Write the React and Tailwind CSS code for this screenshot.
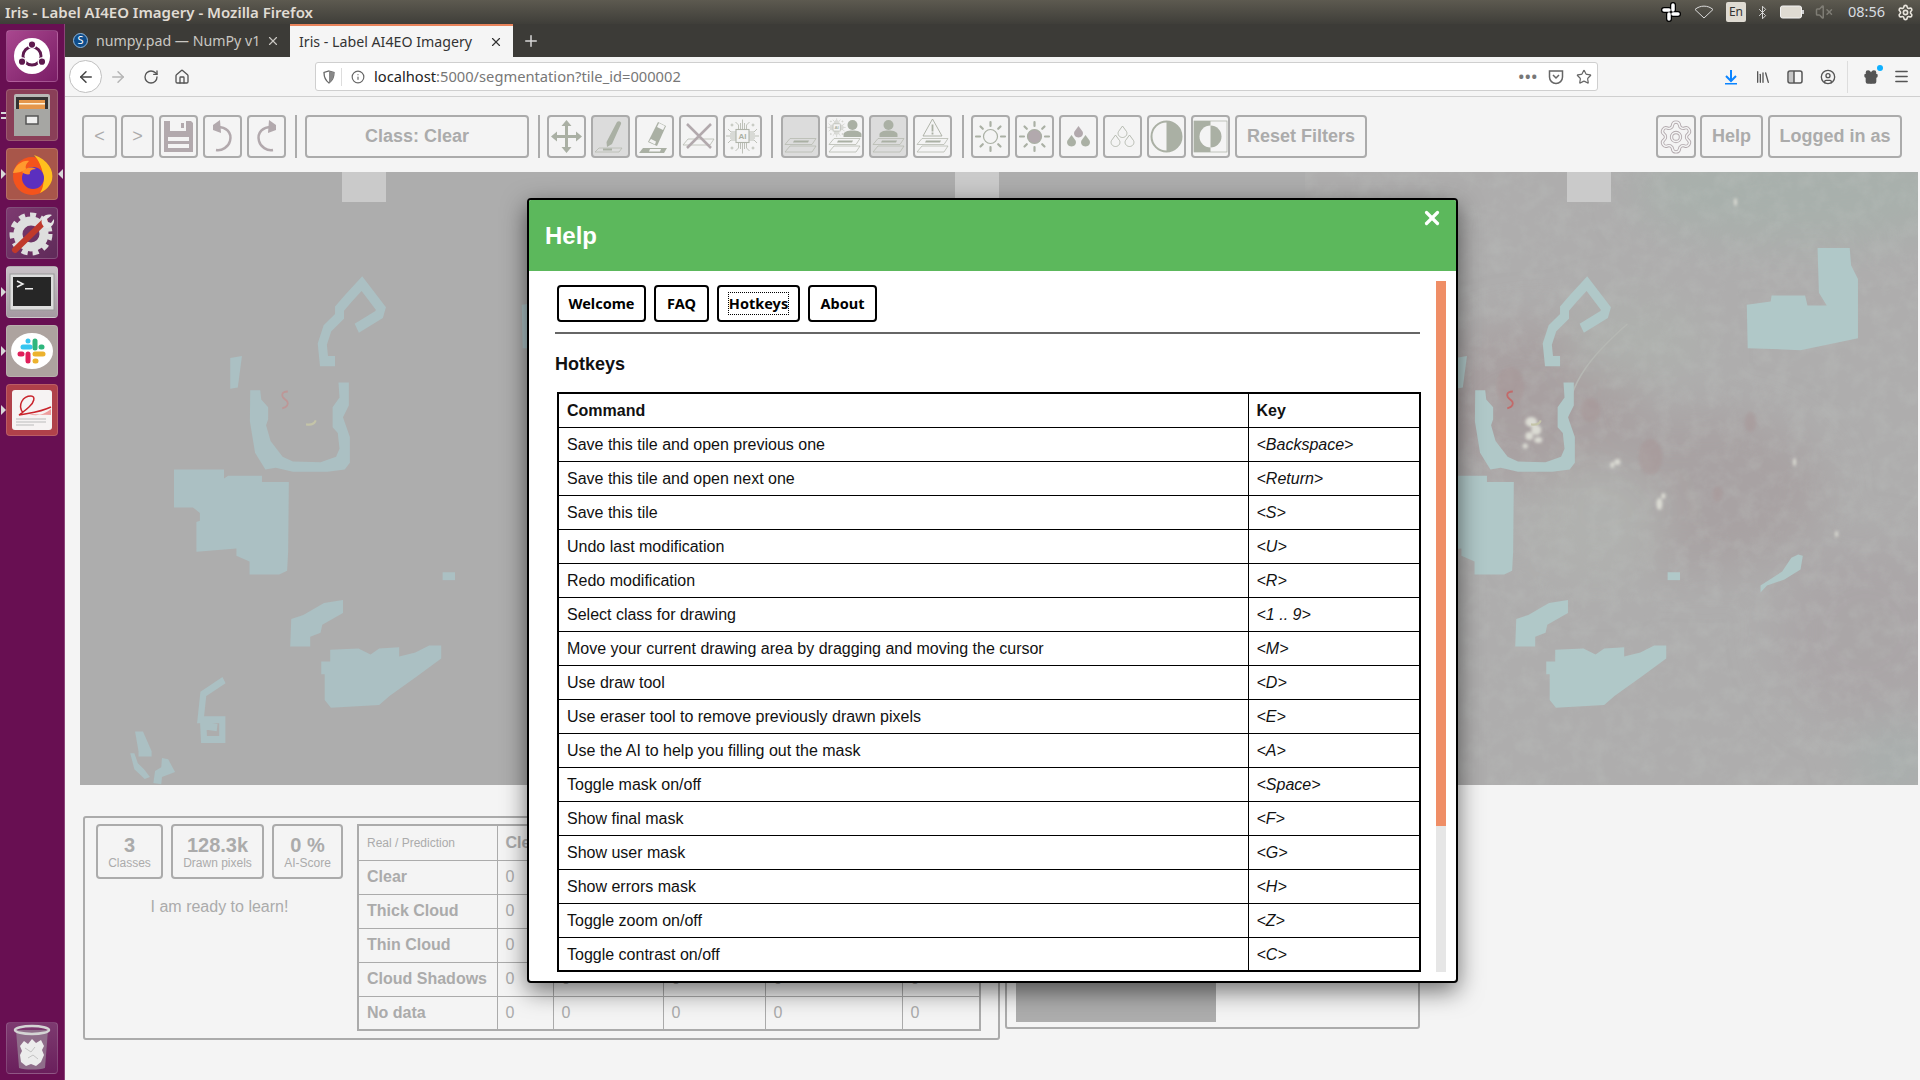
import React from "react";
import { ArrowLeft, ArrowRight, RotateCw, Home, Info, Star, Library, CircleUser, Gift, Menu, Bluetooth, VolumeX, Settings, Plus, X } from "lucide-react";

const ROWS = [
  ["Save this tile and open previous one", "<Backspace>"],
  ["Save this tile and open next one", "<Return>"],
  ["Save this tile", "<S>"],
  ["Undo last modification", "<U>"],
  ["Redo modification", "<R>"],
  ["Select class for drawing", "<1 .. 9>"],
  ["Move your current drawing area by dragging and moving the cursor", "<M>"],
  ["Use draw tool", "<D>"],
  ["Use eraser tool to remove previously drawn pixels", "<E>"],
  ["Use the AI to help you filling out the mask", "<A>"],
  ["Toggle mask on/off", "<Space>"],
  ["Show final mask", "<F>"],
  ["Show user mask", "<G>"],
  ["Show errors mask", "<H>"],
  ["Toggle zoom on/off", "<Z>"],
  ["Toggle contrast on/off", "<C>"],
];
const CLASSES = ["Clear", "Thick Cloud", "Thin Cloud", "Cloud Shadows", "No data"];

const SAGE = "#aab0a4";
const MAUVE = "#b2a9ad";

const Btn = ({ w = "w-[39px]", active, children, className = "" }) => (
  <button className={`${w} h-[43px] shrink-0 rounded-[4px] border-2 border-[#ababab] flex items-center justify-center font-bold text-[18px] text-[#ababab] ${active ? "bg-[#dcdcdc]" : "bg-[#f4f4f4]"} ${className}`}>
    {children}
  </button>
);
const Sep = ({ className = "" }) => <div className={`w-[2px] h-[43px] bg-[#ababab] shrink-0 ${className}`} />;
const Ico = ({ children }) => <svg width="35" height="39" viewBox="0 0 35 39">{children}</svg>;
const Sheets = ({ one }) => (
  <g fill="none" stroke="#b6bab0" strokeWidth="0.8">
    {!one && <polygon points="7,21.5 33,21.5 29,27.5 2,27.5" />}
    <polygon points="7,29 33,29 29,35 2,35" />
    {!one && <polygon points="11,23.5 26,23.5 25,25.5 10,25.5" fill={SAGE} stroke="none" />}
  </g>
);
const Person = ({ dx = 0, s = 1 }) => (
  <g transform={`translate(${dx},0)`} fill={SAGE}>
    <circle cx="17.5" cy="8" r={5 * s} />
    <path d="M8.5 20v-2.5c0-2.5 4-4 9-4s9 1.500 9 4v2.500z" />
  </g>
);
const Chip = () => (
  <g fill="none" stroke="#b0b4aa" strokeWidth="0.8">
    <rect x="11" y="12.500" width="13" height="13" strokeWidth="1.100" />
    <path d="M13.500 12.500V8l-3-3M17.500 12.500V2.500M21.500 12.500V8l3-3M15.500 12.500V6M19.500 12.500V6M13.500 25.500V31l-3 3M17.500 25.500V36.500M21.500 25.500V31l3 3M15.500 25.500V32M19.500 25.500V32M11 15H6l-3-3M11 19H1M11 23H6l-3 3M11 17H5M11 21H5M24 15h5l3-3M24 19h10M24 23h5l3 3M24 17h6M24 21h6" />
    <circle cx="7" cy="8" r="1" /><circle cx="28" cy="8" r="1" /><circle cx="7" cy="31" r="1" /><circle cx="28" cy="31" r="1" />
    <text x="17.500" y="22" textAnchor="middle" fontSize="8" fontWeight="700" fill={SAGE} stroke="none" fontFamily="Liberation Sans">AI</text>
  </g>
);
const Sun = ({ filled }) => (
  <g>
    <circle cx="17.500" cy="19.500" r="7" fill={filled ? MAUVE : "none"} stroke={SAGE} strokeWidth="1.200" />
    <g stroke={SAGE} strokeWidth="2.200" strokeLinecap="round">
      <path d="M17.500 5v4M17.500 30v4M3 19.500h4M28 19.500h4M7.500 9.500l2.300 2.300M25.200 27.200l2.300 2.300M27.500 9.500l-2.300 2.300M9.800 27.200l-2.300 2.300" />
    </g>
  </g>
);
const Drop = ({ x, y, filled, c }) => (
  <path d={`M${x} ${y}l4 5.500c1.500 3-1 6-4 6s-5.500-3-4-6z`} fill={filled ? c : "none"} stroke={filled ? "none" : "#a8ada2"} strokeWidth="0.8" />
);

function Toolbar() {
  return (
    <div className="h-[75px] pt-[18px] pl-[17px] pr-[18px] flex items-start gap-[5px] bg-[#f4f4f4] shrink-0">
      <Btn w="w-[35px]"><span className="font-normal text-[18px]">&lt;</span></Btn>
      <Btn w="w-[33px]" className="ml-[-1px]"><span className="font-normal text-[18px]">&gt;</span></Btn>
      <Btn>
        <Ico><path d="M3 4h27l2 2v29H3z" fill={MAUVE} /><rect x="9" y="4" width="16" height="10" fill="#f4f4f4" /><rect x="20" y="6" width="3" height="5" fill={MAUVE} /><rect x="7" y="20" width="21" height="4" fill="#f4f4f4" /><rect x="7" y="27" width="21" height="4" fill="#f4f4f4" /></Ico>
      </Btn>
      <Btn>
        <Ico><path d="M10 10c12-1 17 6 15 14-1.500 6-8 10-14 9" fill="none" stroke={MAUVE} strokeWidth="2.500" /><path d="M8 8l7-5 1 13-8-3z" fill={MAUVE} /></Ico>
      </Btn>
      <Btn>
        <Ico><path d="M25 10C13 9 8 16 10 24c1.500 6 8 10 14 9" fill="none" stroke={MAUVE} strokeWidth="2.500" /><path d="M27 8l-7-5-1 13 8-3z" fill={MAUVE} /></Ico>
      </Btn>
      <Sep className="ml-[4px] mr-[3px]" />
      <Btn w="w-[224px]">Class: Clear</Btn>
      <Sep className="ml-[4px] mr-[2px]" />
      <Btn>
        <Ico>
          <g fill={SAGE}>
            <rect x="16" y="8" width="3" height="23" /><rect x="6" y="18" width="23" height="3" />
            <path d="M17.500 3l5 6h-10zM17.500 36l5-6h-10zM2 19.500l6-5v10zM33 19.500l-6-5v10z" />
          </g>
        </Ico>
      </Btn>
      <Btn active>
        <Ico><path d="M24 5c2-2 5 0 4 2L19 27l-5 3-0.500-5z" fill={SAGE} /><polygon points="6,31 29,31 26,35 2,35" fill="none" stroke="#b6bab0" strokeWidth="0.8" /><rect x="10" y="31.500" width="9" height="2" fill={SAGE} /></Ico>
      </Btn>
      <Btn>
        <Ico><path d="M21 5l8 4-9 20-9-4z" fill={SAGE} /><path d="M22 6l6 3-2 4-6-3zM14 22l5 2.500-1 3-6-3z" fill="#f4f4f4" /><polygon points="6,31 30,31 27,36 2,36" fill={SAGE} /><polygon points="13,32 24,32 23,34.500 12,34.500" fill="#f4f4f4" /></Ico>
      </Btn>
      <Btn>
        <Ico><polygon points="7,22 33,22 29,28 2,28" fill="none" stroke="#b6bab0" strokeWidth="0.8" /><path d="M6 7l24 24M30 7L6 31" stroke={MAUVE} strokeWidth="2.500" /></Ico>
      </Btn>
      <Btn><Ico><Chip /></Ico></Btn>
      <Sep className="ml-[4px] mr-[3px]" />
      <Btn active><Ico><Sheets /></Ico></Btn>
      <Btn>
        <Ico><g transform="translate(0,0) scale(0.55)"><Chip /></g><Person dx={8} /><Sheets /></Ico>
      </Btn>
      <Btn active><Ico><Person /><Sheets /></Ico></Btn>
      <Btn>
        <Ico><path d="M17.500 2L27 19H8z" fill="none" stroke="#a8ada2" strokeWidth="0.9" /><path d="M17.500 7.500v7M17.500 15.500v2" stroke={SAGE} strokeWidth="1.800" /><Sheets /></Ico>
      </Btn>
      <Sep className="ml-[5px] mr-[2px]" />
      <Btn><Ico><Sun /></Ico></Btn>
      <Btn><Ico><Sun filled /></Ico></Btn>
      <Btn><Ico><Drop x={17.500} y={9} filled c={MAUVE} /><Drop x={10.500} y={18} filled c={SAGE} /><Drop x={24.500} y={18} filled c={SAGE} /></Ico></Btn>
      <Btn><Ico><Drop x={17.500} y={9} /><Drop x={10.500} y={18} /><Drop x={24.500} y={18} /></Ico></Btn>
      <Btn><Ico><circle cx="17.500" cy="19.500" r="15" fill="#f4f4f4" stroke={SAGE} strokeWidth="2" /><path d="M17.500 4.500a15 15 0 0 1 0 30z" fill={SAGE} /></Ico></Btn>
      <Btn>
        <Ico><rect x="1" y="4" width="33" height="31" fill="none" stroke={SAGE} strokeWidth="0.7" /><rect x="1" y="4" width="16.500" height="31" fill={SAGE} /><circle cx="17.500" cy="19.500" r="11" fill="#f4f4f4" /><path d="M17.500 8.500a11 11 0 0 1 0 22z" fill={SAGE} /></Ico>
      </Btn>
      <Btn w="w-[132px]">Reset Filters</Btn>
      <div className="ml-auto flex gap-[5px]">
        <Btn w="w-[40px]" className="mr-[-1px]">
          <span className="relative flex items-center justify-center">
            <Settings size={36} strokeWidth={2.200} color={MAUVE} />
            <Settings size={36} strokeWidth={1} color="#f4f4f4" className="absolute" />
          </span>
        </Btn>
        <Btn w="w-[63px]">Help</Btn>
        <Btn w="w-[134px]">Logged in as</Btn>
      </div>
    </div>
  );
}

function MapPanel({ terrain, id }) {
  const mask = terrain ? "#b0c8c8" : "#abc0c3";
  return (
    <div className="relative flex-1 min-w-0 bg-[#adadad]">
      <svg className="block w-full h-full" viewBox="0 0 612 613" preserveAspectRatio="none">
        {terrain && (
          <g>
            <defs>
              <filter id={`n${id}`} x="0" y="0" width="100%" height="100%"><feTurbulence type="fractalNoise" baseFrequency="0.06" numOctaves="5" seed="11" /><feColorMatrix values="0 0 0 0 0.52  0 0 0 0 0.55  0 0 0 0 0.53  1.800 0 0 0 -0.72" /></filter>
              <filter id={`b${id}`} x="-30%" y="-30%" width="160%" height="160%"><feGaussianBlur stdDeviation="22" /></filter>
              <filter id={`s${id}`} x="-50%" y="-50%" width="200%" height="200%"><feGaussianBlur stdDeviation="1.500" /></filter>
            </defs>
            <rect width="612" height="613" fill="#aeadad" />
            <g filter={`url(#b${id})`}>
              <ellipse cx="230" cy="230" rx="110" ry="80" fill="#a8a0a1" />
              <ellipse cx="400" cy="320" rx="120" ry="80" fill="#a8a2a3" />
              <ellipse cx="560" cy="460" rx="90" ry="90" fill="#aaa6a7" />
              <ellipse cx="290" cy="350" rx="70" ry="60" fill="#b0b1af" />
              <ellipse cx="500" cy="20" rx="170" ry="50" fill="#a8b0ac" />
              <ellipse cx="330" cy="170" rx="70" ry="40" fill="#aeb0ad" />
              <ellipse cx="590" cy="590" rx="40" ry="40" fill="#a9afad" />
            </g>
            <rect width="612" height="613" filter={`url(#n${id})`} opacity="0.3" />
            <path d="M262 250C262 210 290 180 322 152" fill="none" stroke="#b6b8b4" strokeWidth="1.500" />
            <g fill="#a79495" filter={`url(#s${id})`} opacity="0.45">
              <ellipse cx="345" cy="285" rx="12" ry="18" /><ellipse cx="205" cy="215" rx="14" ry="20" /><ellipse cx="285" cy="238" rx="10" ry="12" /><ellipse cx="445" cy="250" rx="6" ry="10" /><ellipse cx="412" cy="322" rx="5" ry="8" />
            </g>
            <g fill="#dcdcd4" filter={`url(#s${id})`}>
              <ellipse cx="226" cy="250" rx="6" ry="5" /><ellipse cx="231" cy="258" rx="5" ry="5" /><ellipse cx="224" cy="264" rx="4" ry="4" /><ellipse cx="233" cy="268" rx="4" ry="3" /><ellipse cx="220" cy="274" rx="2.500" ry="2.500" />
              <ellipse cx="312" cy="290" rx="3" ry="3" /><ellipse cx="307" cy="293" rx="2" ry="3" /><ellipse cx="354" cy="332" rx="3" ry="6" /><ellipse cx="358" cy="324" rx="2" ry="3" /><ellipse cx="489" cy="290" rx="1.500" ry="4" /><ellipse cx="531" cy="362" rx="1.500" ry="3" /><ellipse cx="430" cy="30" rx="1.500" ry="4" />
            </g>
          </g>
        )}
        <g transform="translate(-80,8) scale(0.3444,0.3954)" fill={mask}>
          <polygon points="505,732 650,732 650,755 662,748 760,748 760,764 838,764 836,940 833,988 810,998 724,998 724,965 686,950 686,932 570,940 570,865 580,862 580,842 560,828 505,828" />
          <polygon points="726,532 755,532 758,555 778,575 778,605 772,620 785,660 820,700 850,712 930,714 975,700 985,680 980,640 965,625 965,575 985,550 982,512 1012,512 1012,570 995,600 1015,650 1015,715 1000,732 950,738 850,738 800,728 770,732 740,690 725,610" />
          <polyline points="1035,375 1100,340 1105,325 1050,262 1010,300 985,325 985,345 950,375 935,415 940,458 972,458" fill="none" stroke={mask} strokeWidth="26" />
          <polygon points="668,450 702,445 690,525 668,528" />
          <polygon points="845,1110 880,1100 940,1070 995,1062 995,1095 935,1125 930,1145 900,1155 900,1180 842,1180" />
          <polygon points="958,1188 1040,1185 1075,1200 1100,1185 1158,1182 1158,1205 1205,1195 1245,1177 1280,1177 1280,1210 1210,1255 1130,1305 1100,1328 960,1335 942,1315 942,1250 932,1250 932,1218 958,1218" />
          <polyline points="650,1265 590,1300 582,1365 645,1365 645,1415 592,1415 590,1380 630,1385" fill="none" stroke={mask} strokeWidth="18" />
          <polygon points="392,1395 415,1395 440,1445 440,1458 402,1458 402,1445" />
          <polygon points="378,1450 390,1450 400,1475 418,1490 435,1510 420,1515 390,1490" />
          <polygon points="445,1525 450,1495 468,1485 470,1462 488,1465 508,1497 470,1510 468,1528" />
          <polygon points="1284,992 1320,992 1320,1012 1284,1012" />
          <path d="M835 535c-20 0-20 12-8 20 14 8 8 20-8 22" fill="none" stroke={terrain ? "#c26a6a" : "#bd9797"} strokeWidth="5" />
          <path d="M888 618c14 2 24 0 28-10" fill="none" stroke="#c4c4a8" strokeWidth="6" />
        </g>
        <g transform="translate(-104,18) scale(0.459,0.3954)" fill={mask}>
          <polygon points="1342,147 1412,147 1415,190 1430,225 1430,375 1305,405 1190,400 1188,290 1240,282 1242,267 1315,267 1320,292 1362,292 1345,260" />
          <polygon points="1300,922 1310,925 1305,960 1270,985 1232,1000 1218,1018 1218,1000 1265,965 1285,930" />
        </g>
      </svg>
      <div className="absolute top-0 left-[262px] w-[44px] h-[30px] bg-[#cacaca]" />
    </div>
  );
}

const Stat = ({ w, n, l }) => (
  <div className={`${w} h-[55px] rounded-[4px] border-2 border-[#ababab] flex flex-col items-center justify-center text-[#ababab] leading-none`}>
    <div className="font-bold text-[20px] mt-[1px]">{n}</div>
    <div className="text-[12px] mt-[2px]">{l}</div>
  </div>
);

function Bottom() {
  const cols = ["w-[139px]", "w-[56px]", "w-[110px]", "w-[102px]", "w-[137px]", "w-[78px]"];
  return (
    <div className="flex items-start pl-[18px] pt-[31px] gap-[5px]">
      <div className="w-[917px] h-[224px] rounded-[3px] border-2 border-[#ababab] flex pl-[11px] pt-[6px] shrink-0">
        <div className="w-[247px]">
          <div className="flex gap-[8px]">
            <Stat w="w-[67px]" n="3" l="Classes" />
            <Stat w="w-[93px]" n="128.3k" l="Drawn pixels" />
            <Stat w="w-[71px]" n="0 %" l="AI-Score" />
          </div>
          <div className="mt-[16px] text-center text-[16px] text-[#ababab]">I am ready to learn!</div>
        </div>
        <table className="ml-[14px] border-collapse border-2 border-[#ababab] text-[16px] text-[#ababab] h-[207px] table-fixed w-[622px]">
          <thead>
            <tr className="h-[35px]">
              <th className={`${cols[0]} border border-[#ababab] text-left pl-[8px] font-normal text-[12px]`}>Real / Prediction</th>
              {CLASSES.map((c, i) => (
                <th key={c} className={`${cols[i + 1]} border border-[#ababab] text-left pl-[8px] font-bold whitespace-nowrap overflow-hidden`}>{c}</th>
              ))}
            </tr>
          </thead>
          <tbody>
            {CLASSES.map((c) => (
              <tr key={c} className="h-[34px]">
                <td className="border border-[#ababab] pl-[8px] font-bold whitespace-nowrap">{c}</td>
                {CLASSES.map((k) => (
                  <td key={k} className="border border-[#ababab] pl-[8px]">0</td>
                ))}
              </tr>
            ))}
          </tbody>
        </table>
      </div>
      <div className="w-[415px] h-[213px] rounded-b-[3px] border-2 border-[#ababab] pl-[9px] pt-[4px] shrink-0">
        <div className="w-[200px] h-[200px] bg-[#adadad]" />
      </div>
    </div>
  );
}

const Tile = ({ bg, pipL, pipR, pip2, children }) => (
  <div className={`relative w-[52px] h-[52px] ml-[6px] rounded-[4px] shrink-0 ${bg} border border-white/15 flex items-center justify-center`}>
    {children}
    {pipL && <span className="absolute left-[-6px] top-[20px] w-0 h-0 border-y-[5px] border-y-transparent border-l-[5px] border-l-[#d8d8d8]" />}
    {pipR && <span className="absolute right-[-6px] top-[20px] w-0 h-0 border-y-[5px] border-y-transparent border-r-[5px] border-r-[#d8d8d8]" />}
    {pip2 && <span className="absolute left-[-6px] top-[22px] w-[5px] h-[7px] border-y-2 border-[#d8d8d8]" />}
  </div>
);

function Dock() {
  return (
    <div className="w-[65px] shrink-0 bg-[#680f52] border-r border-[#8b4478] flex flex-col gap-[7px] pt-[6px] pb-[6px] h-[1056px]">
      <Tile bg="bg-gradient-to-br from-[#a9478f] to-[#7a1c66]">
        <svg width="38" height="38" viewBox="0 0 40 40"><circle cx="20" cy="20" r="19" fill="#fff" /><circle cx="20" cy="20" r="9.500" fill="none" stroke="#5e1a4e" strokeWidth="3" /><g fill="#5e1a4e" stroke="#fff" strokeWidth="1.500"><circle cx="20" cy="8" r="4" /><circle cx="9.500" cy="26" r="4" /><circle cx="30.500" cy="26" r="4" /></g></svg>
      </Tile>
      <Tile bg="bg-[#8a3f58]" pip2>
        <svg width="42" height="46" viewBox="0 0 42 46"><rect x="3" y="2" width="36" height="42" rx="2" fill="#b8b8b6" /><rect x="5" y="5" width="32" height="12" fill="#333" /><rect x="8" y="8" width="26" height="9" fill="#e5964a" /><rect x="8" y="11" width="26" height="1.500" fill="#fff3dc" /><rect x="3" y="17" width="36" height="27" fill="#a6a6a3" /><rect x="15" y="24" width="12" height="8" fill="#eee" stroke="#555" strokeWidth="1.500" /></svg>
      </Tile>
      <Tile bg="bg-[#a8564a]" pipL pipR>
        <svg width="46" height="46" viewBox="0 0 46 46"><circle cx="23" cy="25" r="19" fill="#f4531c" /><path d="M25 4c14 5 20 15 18 25-2 6-6 10-12 13C38 32 34 14 25 4z" fill="#ffc01e" /><path d="M4 22C6 14 14 9 20 10c-4 4-4 7-2 9-6 2-10 3-14 3z" fill="#ff9a2e" /><circle cx="24" cy="27" r="11" fill="#5b2fbf" /><path d="M13 21c3-4 9-6 14-3-5 0-7 3-6 5-2 1-6 0-8-2z" fill="#ff8d24" /></svg>
      </Tile>
      <Tile bg="bg-gradient-to-br from-[#7d3a70] to-[#5f2a59]">
        <svg width="46" height="46" viewBox="0 0 46 46"><g fill="none" stroke="#dedede"><circle cx="22" cy="24" r="13" strokeWidth="9" /><circle cx="22" cy="24" r="19" strokeWidth="5" strokeDasharray="6 5" /></g><path d="M6 40L36 11" stroke="#c0392b" strokeWidth="6" strokeLinecap="round" /><path d="M33 14c-2-6 3-11 10-9l-5 4 1 3 3 1 3-4c1 7-6 11-10 8z" fill="#e5e5e5" /></svg>
      </Tile>
      <Tile bg="bg-gradient-to-b from-[#c8c1c6] to-[#a59aa2]" pipL>
        <svg width="46" height="38" viewBox="0 0 46 38"><rect x="1" y="1" width="44" height="36" fill="#ddd" stroke="#999" /><rect x="4" y="4" width="38" height="29" fill="#262626" /><path d="M8 8l6 3-6 3" fill="none" stroke="#eee" strokeWidth="1.500" /><rect x="16" y="15" width="8" height="1.500" fill="#eee" /></svg>
      </Tile>
      <Tile bg="bg-[#ada39f]" pipL>
        <svg width="42" height="36" viewBox="0 0 42 36"><ellipse cx="21" cy="18" rx="21" ry="18" fill="#fff" /><g strokeWidth="5" strokeLinecap="round"><path d="M12 14h7" stroke="#36c5f0" /><path d="M24 8v7" stroke="#2eb67d" /><path d="M30 14h1" stroke="#2eb67d" /><path d="M24 21h8" stroke="#ecb22e" /><path d="M24 28h1" stroke="#ecb22e" /><path d="M17 21v7" stroke="#e01e5a" /><path d="M9 21h2" stroke="#e01e5a" /><path d="M17 8h0" stroke="#36c5f0" /></g></svg>
      </Tile>
      <Tile bg="bg-[#b0414a]" pipL>
        <svg width="42" height="42" viewBox="0 0 42 42"><rect x="1" y="1" width="40" height="40" rx="3" fill="#f6f3f3" /><path d="M12 24c-6-8 0-17 8-17 5 0 3 7-2 11-3 3-6 5-10 8 10-2 22-3 32-8" fill="none" stroke="#c9242c" strokeWidth="1.500" /><path d="M18 25c8 3 16 0 22-5v6z" fill="#ee9c9c" /><path d="M5 30h30M5 33h30M5 36h18" stroke="#bbb" /></svg>
      </Tile>
      <div className="mt-auto">
        <Tile bg="bg-gradient-to-b from-[#7d3a70] to-[#6a1f5c]">
          <svg width="38" height="48" viewBox="0 0 38 48"><path d="M3 6l3 38c6 2 20 2 26 0l3-38" fill="#8f6d8a" /><ellipse cx="19" cy="6" rx="17" ry="4" fill="none" stroke="#d4d4d4" strokeWidth="2.500" /><path d="M7 22l4-5 4 3 4-5 4 4 5-3 3 6-2 4 2 5-3 7-5 4-5-2-5 2-5-4-1-7 2-4z" fill="#ececec" /><path d="M12 24l6 4 4-5M15 34l5-3 5 4" fill="none" stroke="#c4c4c4" /></svg>
        </Tile>
      </div>
    </div>
  );
}

const TABS = [["Welcome", "w-[89px]"], ["FAQ", "w-[55px]"], ["Hotkeys", "w-[83px]"], ["About", "w-[69px]"]];

function Modal() {
  return (
    <div className="absolute left-[527px] top-[198px] w-[931px] h-[785px] rounded-[4px] border-2 border-black bg-white flex flex-col overflow-hidden shadow-[0_8px_24px_rgba(0,0,0,0.55)] font-['Liberation_Sans',sans-serif]">
      <div className="h-[71px] bg-[#5cb85c] shrink-0 flex items-start justify-between text-white">
        <h2 className="ml-[16px] mt-[21px] text-[24px] font-bold leading-[30px]">Help</h2>
        <X size={22} strokeWidth={3.500} className="mt-[7px] mr-[13px]" />
      </div>
      <div className="flex flex-1 min-h-0 pt-[10px]">
        <div className="w-[907px] pl-[26px] pr-[16px] h-[691px] overflow-hidden shrink-0">
          <div className="flex gap-[8px] pl-[2px] pt-[4px]">
            {TABS.map(([t, w]) => (
              <button key={t} className={`${w} h-[37px] rounded-[4px] border-2 border-black flex items-center justify-center font-['Noto_Sans',sans-serif] font-bold text-[14.500px] text-black bg-white`}>
                <span className={t === "Hotkeys" ? "outline-1 outline-dotted outline-black" : ""}>{t}</span>
              </button>
            ))}
          </div>
          <div className="h-[2px] bg-[#666] mt-[10px] w-[865px]" />
          <h3 className="text-[18px] font-bold text-[#111] mt-[19px] leading-[22px]">Hotkeys</h3>
          <table className="mt-[17px] ml-[2px] w-[864px] table-fixed border-collapse border-2 border-black text-[16px] text-[#111]">
            <tbody>
              <tr className="h-[34px]">
                <th className="border border-black text-left pl-[8px] pt-[2px] font-bold w-[690px]">Command</th>
                <th className="border border-black text-left pl-[8px] pt-[2px] font-bold">Key</th>
              </tr>
              {ROWS.map(([a, b]) => (
                <tr key={a} className="h-[34px]">
                  <td className="border border-black pl-[8px] pt-[2px]">{a}</td>
                  <td className="border border-black pl-[8px] pt-[2px] italic">{b}</td>
                </tr>
              ))}
            </tbody>
          </table>
        </div>
        <div className="w-[10px] h-[691px] bg-[#e6e6e6] shrink-0">
          <div className="h-[545px] bg-[#ef8e66]" />
        </div>
      </div>
    </div>
  );
}

function TopBar() {
  return (
    <div className="h-[24px] shrink-0 bg-gradient-to-b from-[#5d5a50] to-[#3f3e39] flex items-center pl-[5px] pr-[6px] text-[#e0dcd4] font-['Noto_Sans',sans-serif]">
      <span className="text-[15px] font-semibold">Iris - Label AI4EO Imagery - Mozilla Firefox</span>
      <div className="ml-auto flex items-center">
        <svg width="20" height="20" viewBox="0 0 20 20" className="mr-[13px]"><g stroke="#000" strokeWidth="6" strokeLinecap="round"><path d="M3 8h5M12 3v5M12 12h5M8 12v5" /></g><g stroke="#fff" strokeWidth="3.500" strokeLinecap="round"><path d="M3 8h5M12 3v5M12 12h5M8 12v5" /></g></svg>
        <svg width="20" height="14" viewBox="0 0 20 14" className="mr-[12px]"><path d="M1 4.500C6 0 14 0 19 4.500L10 13z" fill="none" stroke="#dcdcdc" /></svg>
        <span className="w-[20px] h-[20px] bg-[#dfdbd2] rounded-[2px] text-[#333] text-[12px] flex items-center justify-center mr-[9px]">En</span>
        <Bluetooth size={15} strokeWidth={1.500} color="#dcdcdc" className="mr-[10px]" />
        <svg width="24" height="14" viewBox="0 0 24 14" className="mr-[11px]"><rect x="0.500" y="1" width="21" height="12" rx="2" fill="#dfdbd2" stroke="#f2f2f2" /><rect x="22" y="5" width="2" height="4" fill="#cfcfcf" /></svg>
        <VolumeX size={18} color="#7e7c74" className="mr-[15px]" />
        <span className="text-[14.500px] mr-[12px] text-[#d8dde0]">08:56</span>
        <Settings size={17} strokeWidth={2.300} color="#e8e4dc" />
      </div>
    </div>
  );
}

function Tabs() {
  return (
    <div className="h-[33px] shrink-0 bg-[#3c3b37] flex items-stretch font-['Noto_Sans',sans-serif] text-[14.200px]">
      <div className="w-[225px] flex items-center pl-[8px] pr-[10px] text-[#c9c7c2] whitespace-nowrap">
        <span className="w-[15px] h-[15px] rounded-full bg-[#0f4d8a] border border-[#8eb6dc] text-white text-[11px] leading-[12px] text-center mr-[8px] shrink-0">S</span>
        <span>numpy.pad — NumPy v1</span>
        <X size={14} className="ml-auto shrink-0" />
      </div>
      <div className="w-[223px] bg-[#f5f5f5] border-t-2 border-[#e8835b] flex items-center pl-[9px] pr-[10px] text-[#333] whitespace-nowrap">
        <span>Iris - Label AI4EO Imagery</span>
        <X size={14} className="ml-auto" />
      </div>
      <Plus size={18} color="#d8d8d8" className="self-center ml-[9px]" />
    </div>
  );
}

function Nav() {
  return (
    <div className="h-[40px] shrink-0 bg-[#f5f5f5] border-b border-[#cfcfcf] flex items-center text-[#555] font-['Noto_Sans',sans-serif]">
      <div className="ml-[4px] w-[33px] h-[33px] rounded-full border border-[#c0c0c0] bg-white flex items-center justify-center"><ArrowLeft size={18} color="#444" /></div>
      <ArrowRight size={18} color="#b5b5b5" className="ml-[7px]" />
      <RotateCw size={16} color="#555" className="ml-[16px]" />
      <Home size={16} color="#555" className="ml-[15px]" />
      <div className="ml-[125px] w-[1283px] h-[29px] rounded-[3px] border border-[#cfcfcf] bg-white flex items-center text-[14.700px]">
        <svg width="14" height="14" viewBox="0 0 14 14" className="ml-[6px]"><path d="M7 1l5 1.500c0 5-1.500 8-5 10.500C3.500 10.500 2 7.500 2 2.500z" fill="none" stroke="#666" strokeWidth="1.300" /><path d="M7 1v12c3.500-2.500 5-5.500 5-10.500z" fill="#888" /></svg>
        <span className="w-px h-[18px] bg-[#ddd] ml-[5px]" />
        <Info size={14} color="#666" className="ml-[9px]" />
        <span className="ml-[9px] text-[#222]">localhost</span>
        <span className="text-[#777]">:5000/segmentation?tile_id=000002</span>
        <span className="ml-auto tracking-[1px] font-bold text-[#777] leading-none">•••</span>
        <svg width="16" height="16" viewBox="0 0 16 16" className="ml-[10px]"><path d="M1.500 2h13v6a6.500 6.500 0 0 1-13 0z" fill="none" stroke="#666" strokeWidth="1.500" /><path d="M5 6l3 3 3-3" fill="none" stroke="#666" strokeWidth="1.500" /></svg>
        <Star size={16} color="#666" strokeWidth={1.800} className="ml-[12px] mr-[5px]" />
      </div>
      <svg width="14" height="16" viewBox="0 0 14 16" className="ml-[126px]"><path d="M7 1v10M2 7l5 5 5-5" fill="none" stroke="#0a84ff" strokeWidth="2" /><rect x="1" y="14" width="12" height="1.500" fill="#0a84ff" /></svg>
      <Library size={16} color="#555" className="ml-[17px]" />
      <svg width="16" height="14" viewBox="0 0 16 14" className="ml-[16px]"><rect x="1" y="1" width="14" height="12" rx="2" fill="none" stroke="#555" strokeWidth="1.500" /><rect x="2" y="2" width="5" height="10" fill="#555" opacity="0.300" /><path d="M7 1v12" stroke="#555" strokeWidth="1.500" /></svg>
      <CircleUser size={16} color="#555" className="ml-[17px]" />
      <span className="w-px h-[32px] bg-[#ddd] ml-[11px]" />
      <span className="relative ml-[15px]">
        <Gift size={16} color="#555" fill="#555" />
        <span className="absolute right-[-4px] top-[-4px] w-[6px] h-[6px] rounded-full bg-[#0fb0ff]" />
      </span>
      <Menu size={17} color="#555" className="ml-[14px]" />
    </div>
  );
}

export default function App() {
  return (
    <div className="relative w-[1920px] h-[1080px] overflow-hidden bg-[#f4f4f4] font-['Liberation_Sans',sans-serif]">
      <TopBar />
      <div className="flex">
        <Dock />
        <div className="flex-1 min-w-0 flex flex-col">
          <Tabs />
          <Nav />
          <Toolbar />
          <div className="ml-[15px] mr-[2px] h-[613px] flex shrink-0">
            <MapPanel id="a" />
            <MapPanel id="b" />
            <MapPanel id="c" terrain />
          </div>
          <Bottom />
        </div>
      </div>
      <Modal />
    </div>
  );
}
